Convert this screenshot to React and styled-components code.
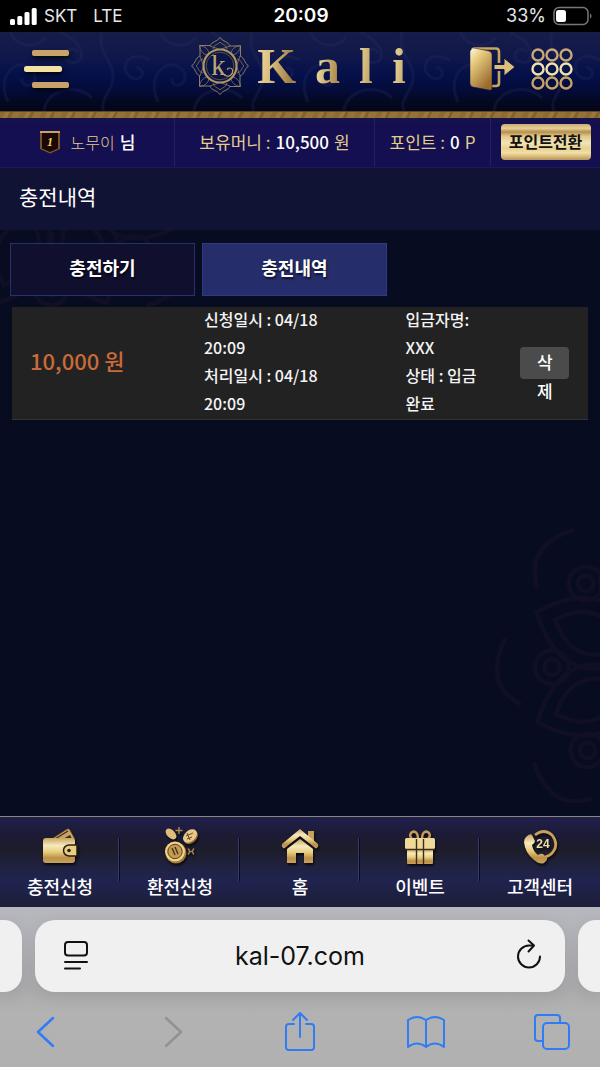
import React from 'react';
import styled, { createGlobalStyle } from 'styled-components';

const gold = '#e3cd8c';
const iosBlue = '#2f7cf6';
const korean = `"Noto Sans CJK KR", sans-serif`;
const system = `Inter, "Noto Sans CJK KR", sans-serif`;

const GlobalStyle = createGlobalStyle`
    *{
        box-sizing: border-box;
    }
    body{
        margin: 0;
        background: #070c20;
        color: #fff;
        font-family: ${korean};
    }
    button{
        margin: 0;
        padding: 0;
        border: 0;
        background: none;
        color: inherit;
        font-family: inherit;
        cursor: pointer;
    }
    a{
        color: inherit;
        text-decoration: none;
    }
    svg{
        display: block;
    }
`;

const Page = styled.div`
    min-height: 100vh;
    display: flex;
    flex-direction: column;
`;

/* phone status bar */

const StatusBar = styled.div`
    height: 32px;
    padding: 0 8px 0 10px;
    background: #000;
    display: grid;
    grid-template-columns: 1fr auto 1fr;
    align-items: center;
    font-family: ${system};
    font-size: 18px;
    line-height: 32px;
    color: #e8e8e8;
`;

const StatusGroup = styled.div`
    display: flex;
    align-items: center;
    gap: 7px;
    justify-content: ${({ end }) => (end ? 'flex-end' : 'flex-start')};
`;

const Carrier = styled.span`
    font-size: 17px;
`;

const Network = styled(Carrier)`
    margin-left: 9px;
`;

const Clock = styled.strong`
    font-size: 19px;
    font-weight: 600;
    color: #fff;
`;

/* site header */

const Header = styled.header`
    position: relative;
    height: 79px;
    padding: 0 27px 5px 24px;
    background: linear-gradient(#171d49 0%, #10184b 30%, #04104a 55%, #040c3b 72%, #04071d 92%, #04061a 100%);
    display: grid;
    grid-template-columns: 1fr auto 1fr;
    align-items: center;
`;

const HeaderPattern = styled.svg`
    position: absolute;
    top: 0;
    left: 0;
    width: 100%;
    height: 100%;
    opacity: .25;
`;

const MenuButton = styled.button`
    position: relative;
    width: 46px;
    height: 42px;
    filter: drop-shadow(1px 3px 2px rgba(0,0,0,.7));
`;

const Logo = styled.a`
    position: relative;
    display: flex;
    align-items: center;
    gap: 8px;
    margin-bottom: 6px;
`;

const LogoName = styled.span`
    margin-right: -19px;
    font-family: "Liberation Serif", serif;
    font-weight: bold;
    font-size: 50px;
    line-height: 68px;
    letter-spacing: 19px;
    background: linear-gradient(95deg, #efdca0 0%, #d8bd7c 10%, #a07c42 22%, #e8d79c 36%, #b08c50 48%, #e3cf92 60%, #b8965a 70%, #e0ca8e 82%, #a8864a 92%);
    background-clip: text;
    color: transparent;
`;

const HeaderTools = styled.div`
    position: relative;
    display: flex;
    justify-content: flex-end;
    align-items: center;
    gap: 16px;
`;

const GoldBand = styled.div`
    height: 7px;
    background: repeating-linear-gradient(115deg, #8d6b30 0 5px, #9a773a 5px 9px, #836229 9px 12px, #957238 12px 19px);
    border-top: 1px solid #5b4a2c;
`;

/* member info */

const InfoBar = styled.div`
    height: 50px;
    padding-bottom: 1px;
    background: linear-gradient(#17134c, #140f50 12%, #140f50);
    border-bottom: 1px solid #1d1853;
    display: grid;
    grid-template-columns: 174fr 200fr 116fr 110fr;
`;

const InfoCell = styled.div`
    display: flex;
    align-items: center;
    justify-content: center;
    gap: 5px;
    border-left: ${({ divided }) => (divided ? '1px solid #26215d' : '0')};
    font-size: 17px;
    line-height: 24px;
    white-space: nowrap;
    color: ${gold};
`;

const InfoValue = styled.span`
    color: #fff;
    font-weight: 500;
`;

const MemberName = styled.span`
    margin-left: 5px;
    font-size: 16px;
    font-weight: 300;
`;

const ConvertButton = styled.button`
    width: 90px;
    height: 36px;
    padding-bottom: 2px;
    border-radius: 4px;
    background: linear-gradient(#c9ac72 0%, #e6cf97 12%, #b5904f 22%, #e3c888 34%, #f3e4b4 52%, #e9d193 68%, #f3dfa4 80%, #b8945a 100%);
    color: #111;
    font-size: 16px;
    font-weight: 700;
    line-height: 32px;
`;

/* content */

const PageTitle = styled.h1`
    margin: 0;
    padding: 0 19px;
    height: 62px;
    background: #111334;
    font-size: 21px;
    font-weight: 400;
    line-height: 56px;
`;

const Content = styled.main`
    position: relative;
    flex: 1;
    padding: 13px 12px 0 10px;
    background: #070c20;
    overflow: hidden;
`;

const Ornament = styled.svg`
    position: absolute;
    ${({ side }) => (side === 'left' ? 'left: -130px; top: -240px;' : 'right: -250px; bottom: -30px;')}
`;

const Tabs = styled.nav`
    position: relative;
    display: flex;
    gap: 7px;
`;

const Tab = styled.button`
    flex: 0 1 32%;
    height: 53px;
    padding-bottom: 5px;
    border: 1px solid ${({ active }) => (active ? '#2e3a86' : '#26316f')};
    background: ${({ active }) => (active ? '#252d6b' : '#110f2e')};
    font-size: 18px;
    font-weight: 700;
    line-height: 46px;
    text-shadow: 1px 2px 2px rgba(0,0,0,.6);
`;

const Row = styled.section`
    position: relative;
    margin: 11px 0 0 2px;
    display: grid;
    grid-template-columns: 20fr 21fr 10fr 9fr;
    align-items: center;
    background: #222;
    border-bottom: 1px solid #303236;
`;

const Amount = styled.strong`
    padding: 0 0 6px 18px;
    color: #c96b38;
    font-size: 22px;
    font-weight: 500;
`;

const Detail = styled.div`
    margin-top: -2px;
    padding: 0 ${({ inset }) => inset}px 2px 0;
    font-size: 16px;
    font-weight: 500;
    line-height: 28px;
    color: #f4f4f4;
`;

const DetailLine = styled.div``;

const DeleteButton = styled.button`
    display: block;
    justify-self: center;
    width: 49px;
    height: 32px;
    padding: 0 16px;
    border-radius: 4px;
    background: #4b4b4b;
    font-size: 17px;
    font-weight: 500;
    line-height: 29px;
    word-break: break-all;
`;

/* site navigation */

const BottomNav = styled.nav`
    height: 91px;
    border-top: 1px solid #8c867c;
    background: linear-gradient(#20204e 0%, #1c1b35 20%, #1d1d2b 38%, #202243 58%, #20234f 70%, #1d1e38 100%);
    display: grid;
    grid-template-columns: repeat(5, 1fr);
`;

const NavItem = styled.a`
    position: relative;
    display: flex;
    flex-direction: column;
    align-items: center;
    padding-top: 10px;
    font-size: 18px;
    font-weight: 500;
    line-height: 34px;
    svg{
        filter: drop-shadow(1px 2px 1px rgba(0,0,0,.7));
    }
    & + &::before{
        content: '';
        position: absolute;
        left: -2px;
        top: 21px;
        height: 43px;
        border-left: 1px solid #36376a;
        border-right: 1px solid #090b1c;
    }
`;

/* browser chrome */

const Browser = styled.footer`
    height: 160px;
    background: linear-gradient(#b7b8be, #ababae 50%, #b2b2b2 66%, #b1b1b1);
    color: #111;
    font-family: ${system};
    overflow: hidden;
`;

const AddressRow = styled.div`
    padding-top: 13px;
    display: grid;
    grid-template-columns: 22px 1fr 22px;
    gap: 13px;
`;

const Pill = styled.div`
    height: 72px;
    background: #f0f0f0;
    border-radius: ${({ radius }) => radius};
    box-shadow: 0 4px 16px rgba(0,0,0,.08);
`;

const AddressBar = styled(Pill)`
    padding: 0 20px 0 26px;
    display: grid;
    grid-template-columns: 30px 1fr 32px;
    align-items: center;
`;

const Address = styled.input`
    width: 100%;
    border: 0;
    padding: 0 4px 0 0;
    outline: 0;
    background: none;
    text-align: center;
    font-family: inherit;
    font-size: 25px;
    color: #111;
`;

const Toolbar = styled.div`
    padding: 19px 28px 0 26px;
    display: flex;
    justify-content: space-between;
`;

const ToolButton = styled.button`
    color: ${({ disabled }) => (disabled ? '#929292' : iosBlue)};
`;

function GoldDefs() {
    return (
        <svg width="0" height="0" style={{ position: 'absolute' }} aria-hidden="true">
            <defs>
                <linearGradient id="goldV" x1="0" y1="0" x2="0" y2="1">
                    <stop offset="0" stopColor="#c9a45c" />
                    <stop offset=".3" stopColor="#f6e9bd" />
                    <stop offset=".55" stopColor="#e8cf80" />
                    <stop offset=".8" stopColor="#bb9048" />
                    <stop offset="1" stopColor="#c9a160" />
                </linearGradient>
                <linearGradient id="goldDoor" x1="0" y1="0" x2=".6" y2="1">
                    <stop offset="0" stopColor="#fffbe2" />
                    <stop offset=".3" stopColor="#ead083" />
                    <stop offset="1" stopColor="#9a6a2e" />
                </linearGradient>
            </defs>
        </svg>
    );
}

function SignalIcon() {
    return (
        <svg width="27" height="18" viewBox="0 0 27 18" fill="#fff">
            <rect x="0" y="12" width="5" height="6" rx="1.5" />
            <rect x="7.3" y="9" width="5" height="9" rx="1.5" />
            <rect x="14.5" y="5" width="5" height="13" rx="1.5" />
            <rect x="21.7" y="1" width="5" height="17" rx="1.5" />
        </svg>
    );
}

function BatteryIcon() {
    return (
        <svg width="39" height="20" viewBox="0 0 39 20">
            <rect x="1" y="1.5" width="34" height="17" rx="5" fill="none" stroke="#777" strokeWidth="1.5" />
            <rect x="3" y="4" width="10" height="12" rx="2.5" fill="#fff" />
            <path d="M37 7.5q1.5.8 1.5 2.5t-1.5 2.5z" fill="#777" />
        </svg>
    );
}

function MenuIcon() {
    return (
        <svg width="46" height="42" viewBox="0 0 46 42">
            <rect x="8" y="2" width="37" height="6" rx="2" fill="#c9a269" />
            <rect x="0" y="18" width="38" height="6" rx="2.5" fill="#f3e3a2" />
            <rect x="8" y="34" width="37" height="6" rx="2" fill="#c9a269" />
        </svg>
    );
}

function Emblem() {
    const quarters = [0, 90, 180, 270];
    return (
        <svg width="58" height="58" viewBox="-29 -29 58 58" fill="none">
            <g stroke="#9c8862" strokeWidth=".9">
                {quarters.map((deg) => (
                    <g key={deg} transform={`rotate(${deg})`}>
                        <path d="M-10-20C-8-25-3-24 0-28.5C3-24 8-25 10-20" />
                        <path d="M-7-17C-6-22-2-21 0-24C2-21 6-22 7-17" strokeWidth=".7" />
                        <path d="M-10-20L0-16.5L10-20" strokeWidth=".7" />
                        <path d="M10-20H20.5V-10" />
                        <path d="M20.5-20.5C14-20 12-16 11-13M20.5-20.5C20-14 16-12 13-11" strokeWidth=".7" />
                    </g>
                ))}
            </g>
            <circle r="16.5" fill="#0b1446" strokeWidth="2.2" stroke="#ae9563" />
            <circle r="13.8" strokeWidth=".7" stroke="#7f6c49" />
            <text x="-9" y="9" fontFamily="Liberation Serif, serif" fontSize="29" fill="#bda673">k</text>
            <path d="M4 9q6 3 8.5-2q1-5-3-5q-2 0-2 2" stroke="#b39a66" strokeWidth="1.2" />
        </svg>
    );
}

function DoorIcon() {
    return (
        <svg width="46" height="46" viewBox="0 0 46 46">
            <path d="M4 2.5H27Q30 2.5 30 6V17M30 25V37Q30 40 27 40H22" fill="none" stroke="#c9a45c" strokeWidth="2.6" />
            <path d="M2 4Q2 1 5 2L20 5Q23 6 23 9V42Q23 45 20 44L4 41Q1 40 1 37V5Z" fill="url(#goldDoor)" stroke="#1a1a3a" strokeWidth=".5" />
            <path d="M25 18.5H35V12L46 21L35 30V23.5H25Z" fill="#dcbf78" stroke="#0a1343" strokeWidth="1" />
        </svg>
    );
}

function AppsIcon() {
    const rows = [{ y: 7, c: '#c9a875' }, { y: 21, c: '#f0e4ac' }, { y: 35, c: '#c5a265' }];
    return (
        <svg width="42" height="42" viewBox="0 0 42 42" fill="none" strokeWidth="2.4">
            {rows.map((row) => [7, 21, 35].map((x) => (
                <circle key={`${x}-${row.y}`} cx={x} cy={row.y} r="5.5" stroke={row.c} />
            )))}
        </svg>
    );
}

function LevelBadge() {
    return (
        <svg width="22" height="24" viewBox="0 0 22 24">
            <path d="M1 1H21V19L11 23.5L1 19Z" fill="#7a5429" />
            <path d="M1 1H21V3H1Z" fill="#c9a460" />
            <path d="M3 3H19V18.5L11 22L3 18.5Z" fill="#1a0708" />
            <text x="11" y="15.5" textAnchor="middle" fontFamily="Liberation Serif, serif" fontSize="12" fontWeight="bold" fontStyle="italic" fill="#f0cf5e">1</text>
        </svg>
    );
}

function WalletIcon() {
    return (
        <svg width="38" height="42" viewBox="0 0 38 42">
            <path d="M9 13L26 2Q28 1 29 3L34 12Z" fill="#c8a264" stroke="#51391a" strokeWidth=".8" />
            <path d="M14 12L27 4" stroke="#3a2b1c" strokeWidth="1.2" />
            <path d="M22 12L29 8L31 12Z" fill="#3a2b1c" />
            <rect x="2" y="11" width="32" height="25" rx="3" fill="url(#goldV)" />
            <path d="M36 18H28a5.5 5.5 0 0 0 0 11H36Z" fill="#e9cd83" stroke="#2a1c10" strokeWidth="1.5" />
            <circle cx="28" cy="23.5" r="1.8" fill="#2a1c10" />
        </svg>
    );
}

function CoinsIcon() {
    return (
        <svg width="38" height="42" viewBox="0 0 38 42">
            <ellipse cx="10" cy="7" rx="6.5" ry="4" transform="rotate(45 10 7)" fill="#e0be7a" />
            <ellipse cx="30" cy="10.5" rx="8" ry="5.5" transform="rotate(-42 30 10.5)" fill="#8a6635" />
            <ellipse cx="29" cy="9" rx="8" ry="5.5" transform="rotate(-42 29 9)" fill="#e6c88b" />
            <path d="M25 9L32 6M26 12L31 10M26 6L29 13" stroke="#67491f" strokeWidth="1" />
            <path d="M18 0V7M14.5 3.5H21.5" stroke="#b18c58" strokeWidth="1.4" />
            <circle cx="15" cy="26" r="10.5" fill="#9e783c" />
            <circle cx="14" cy="24.5" r="10" fill="#f0d387" />
            <circle cx="14" cy="24.5" r="7.2" fill="#c29a51" stroke="#5a3f1b" strokeWidth="1" />
            <path d="M11 21L14 28M14 20L17 27" stroke="#4a3316" strokeWidth="1.4" />
            <path d="M27 21.5q3 3 0 6M33 21.5q-3 3 0 6M28 24.5H32" stroke="#a88453" strokeWidth="1.4" fill="none" />
        </svg>
    );
}

function HomeIcon() {
    return (
        <svg width="38" height="42" viewBox="0 0 38 42">
            <path d="M27 4H33V17L27 12Z" fill="#c8a05a" />
            <path d="M19 2L1 17Q0 19 2 21Q3 22 5 20L19 9L33 20Q35 22 36 21Q38 19 37 17Z" fill="url(#goldV)" />
            <path d="M19 12L32 22V36H23V26H15V36H6V22Z" fill="url(#goldV)" />
        </svg>
    );
}

function GiftIcon() {
    return (
        <svg width="38" height="42" viewBox="0 0 38 42">
            <path d="M17 12C17 5 13 3 10 6Q8 9 11 12M21 12C21 5 25 3 28 6Q30 9 27 12" fill="none" stroke="#c49b58" strokeWidth="2.5" />
            <rect x="4" y="11" width="30" height="11" rx="1.5" fill="#f0d998" />
            <path d="M6 22H32V36Q32 37 31 37H7Q6 37 6 36Z" fill="url(#goldV)" />
            <path d="M15.5 12V37M22.5 12V37M4 22.5H34" stroke="#3c2c19" strokeWidth="1.4" />
        </svg>
    );
}

function SupportIcon() {
    return (
        <svg width="38" height="42" viewBox="0 0 38 42">
            <path d="M14 8Q23 1 31 8Q38 17 32 25Q29 29 24 30" fill="none" stroke="#c9a059" strokeWidth="2.8" />
            <path d="M5 10Q9 6 11 8L14 14Q14 16 11 18Q12 24 17 28Q20 26 22 27L26 31Q27 33 23 36Q19 38 13 33Q4 26 3 15Q3 12 5 10Z" fill="url(#goldV)" />
            <text x="22" y="21" textAnchor="middle" fontFamily="Liberation Sans, sans-serif" fontSize="12" fontWeight="bold" fill="#f0dfa8">24</text>
        </svg>
    );
}

function ReaderIcon() {
    return (
        <svg width="30" height="32" viewBox="0 0 30 32" fill="none" stroke="#111" strokeWidth="2" strokeLinecap="round">
            <rect x="4" y="2" width="22" height="13.5" rx="3" />
            <path d="M4 22H26M4 28.5H19" />
        </svg>
    );
}

function ReloadIcon() {
    return (
        <svg width="32" height="34" viewBox="0 0 32 34" fill="none" stroke="#111" strokeWidth="2" strokeLinecap="round" strokeLinejoin="round">
            <path d="M20 6.5H16A11 11 0 1 0 27 17.5" />
            <path d="M15.5 1.5L21 6.5L15.5 12.5" />
        </svg>
    );
}

function ToolIcon({ children }) {
    return (
        <svg width="40" height="42" viewBox="0 0 40 42" fill="none" stroke="currentColor" strokeWidth="2" strokeLinecap="round" strokeLinejoin="round">
            {children}
        </svg>
    );
}

function Mandala({ side }) {
    const turns = [0, 45, 90, 135, 180, 225, 270, 315];
    return (
        <Ornament side={side} width="360" height="360" viewBox="-160 -160 320 320" fill="none" stroke="#100f25" strokeWidth="4" aria-hidden="true">
            {turns.map((deg) => (
                <g key={deg} transform={`rotate(${deg + 22})`}>
                    <path d="M0-30C-42-60-40-95 0-128C40-95 42-60 0-30Z" />
                    <path d="M0-45C-24-65-24-90 0-110C24-90 24-65 0-45Z" />
                    <circle cx="40" cy="-97" r="15" />
                    <circle cx="40" cy="-97" r="7" />
                    <path d="M20-135Q50-160 80-125" />
                </g>
            ))}
            <circle r="26" />
            <circle r="12" />
        </Ornament>
    );
}

function Swirls() {
    return (
        <HeaderPattern aria-hidden="true">
            <defs>
                <pattern id="swirl" width="150" height="79" patternUnits="userSpaceOnUse">
                    <g fill="none" stroke="#2c3262" strokeWidth="3">
                        <path d="M8 70C-6 40 22 22 34 40C40 54 20 58 22 46" />
                        <path d="M60 0C90 14 84 34 70 30C58 24 70 12 78 20" />
                        <path d="M102 0C96 24 118 30 112 52C106 66 100 70 104 79" />
                        <path d="M150 28C126 16 118 38 132 46C146 50 144 34 136 36" />
                        <path d="M44 79C46 58 76 50 92 66" />
                        <path d="M10 0C16 14 34 18 46 6" />
                    </g>
                </pattern>
            </defs>
            <rect width="100%" height="100%" fill="url(#swirl)" />
        </HeaderPattern>
    );
}

const navItems = [
    { label: '충전신청', icon: WalletIcon },
    { label: '환전신청', icon: CoinsIcon },
    { label: '홈', icon: HomeIcon },
    { label: '이벤트', icon: GiftIcon },
    { label: '고객센터', icon: SupportIcon },
];

function SiteHeader() {
    return (
        <Header>
            <Swirls />
            <MenuButton aria-label="메뉴"><MenuIcon /></MenuButton>
            <Logo href="#">
                <Emblem />
                <LogoName>Kali</LogoName>
            </Logo>
            <HeaderTools>
                <button aria-label="로그아웃"><DoorIcon /></button>
                <button aria-label="전체메뉴"><AppsIcon /></button>
            </HeaderTools>
        </Header>
    );
}

function MemberInfo() {
    return (
        <InfoBar>
            <InfoCell>
                <LevelBadge />
                <MemberName>노무이</MemberName>
                <InfoValue>님</InfoValue>
            </InfoCell>
            <InfoCell divided>
                보유머니 : <InfoValue>10,500</InfoValue> 원
            </InfoCell>
            <InfoCell divided>
                포인트 : <InfoValue>0</InfoValue> P
            </InfoCell>
            <InfoCell divided>
                <ConvertButton>포인트전환</ConvertButton>
            </InfoCell>
        </InfoBar>
    );
}

function BrowserBar() {
    return (
        <Browser>
            <AddressRow>
                <Pill radius="0 18px 18px 0" />
                <AddressBar radius="20px">
                    <button aria-label="페이지 메뉴"><ReaderIcon /></button>
                    <Address aria-label="주소" defaultValue="kal-07.com" />
                    <button aria-label="새로고침"><ReloadIcon /></button>
                </AddressBar>
                <Pill radius="18px 0 0 18px" />
            </AddressRow>
            <Toolbar>
                <ToolButton aria-label="뒤로">
                    <ToolIcon><path d="M27 7L12 21L27 35" strokeWidth="2.5" /></ToolIcon>
                </ToolButton>
                <ToolButton aria-label="앞으로" disabled>
                    <ToolIcon><path d="M13 7L28 21L13 35" strokeWidth="2.5" /></ToolIcon>
                </ToolButton>
                <ToolButton aria-label="공유">
                    <ToolIcon><path d="M15 13H10Q7 13 7 16V36Q7 39 10 39H32Q35 39 35 36V16Q35 13 32 13H27M21 26V2M14 9L21 2L28 9" /></ToolIcon>
                </ToolButton>
                <ToolButton aria-label="책갈피">
                    <ToolIcon><path d="M20 9Q11 3 2 9V36Q11 29 20 36Q29 29 38 36V9Q29 3 20 9ZM20 9V36" /></ToolIcon>
                </ToolButton>
                <ToolButton aria-label="탭">
                    <ToolIcon>
                        <rect x="11" y="12" width="26" height="26" rx="4" />
                        <path d="M11 30H6Q3 30 3 27V7Q3 4 6 4H25Q28 4 28 7V12" />
                    </ToolIcon>
                </ToolButton>
            </Toolbar>
        </Browser>
    );
}

export default function App() {
    return (
        <Page>
            <GlobalStyle />
            <GoldDefs />
            <StatusBar>
                <StatusGroup>
                    <SignalIcon />
                    <Carrier>SKT</Carrier>
                    <Network>LTE</Network>
                </StatusGroup>
                <Clock>20:09</Clock>
                <StatusGroup end>
                    <span>33%</span>
                    <BatteryIcon />
                </StatusGroup>
            </StatusBar>
            <SiteHeader />
            <GoldBand />
            <MemberInfo />
            <PageTitle>충전내역</PageTitle>
            <Content>
                <Mandala side="left" />
                <Mandala side="right" />
                <Tabs>
                    <Tab>충전하기</Tab>
                    <Tab active>충전내역</Tab>
                </Tabs>
                <Row>
                    <Amount>10,000 원</Amount>
                    <Detail inset={48}>
                        <DetailLine>신청일시 : 04/18 20:09</DetailLine>
                        <DetailLine>처리일시 : 04/18 20:09</DetailLine>
                    </Detail>
                    <Detail inset={16}>
                        <DetailLine>입금자명: XXX</DetailLine>
                        <DetailLine>상태 : 입금완료</DetailLine>
                    </Detail>
                    <DeleteButton>삭제</DeleteButton>
                </Row>
            </Content>
            <BottomNav>
                {navItems.map(({ label, icon: Icon }) => (
                    <NavItem key={label} href="#">
                        <Icon />
                        {label}
                    </NavItem>
                ))}
            </BottomNav>
            <BrowserBar />
        </Page>
    );
}
